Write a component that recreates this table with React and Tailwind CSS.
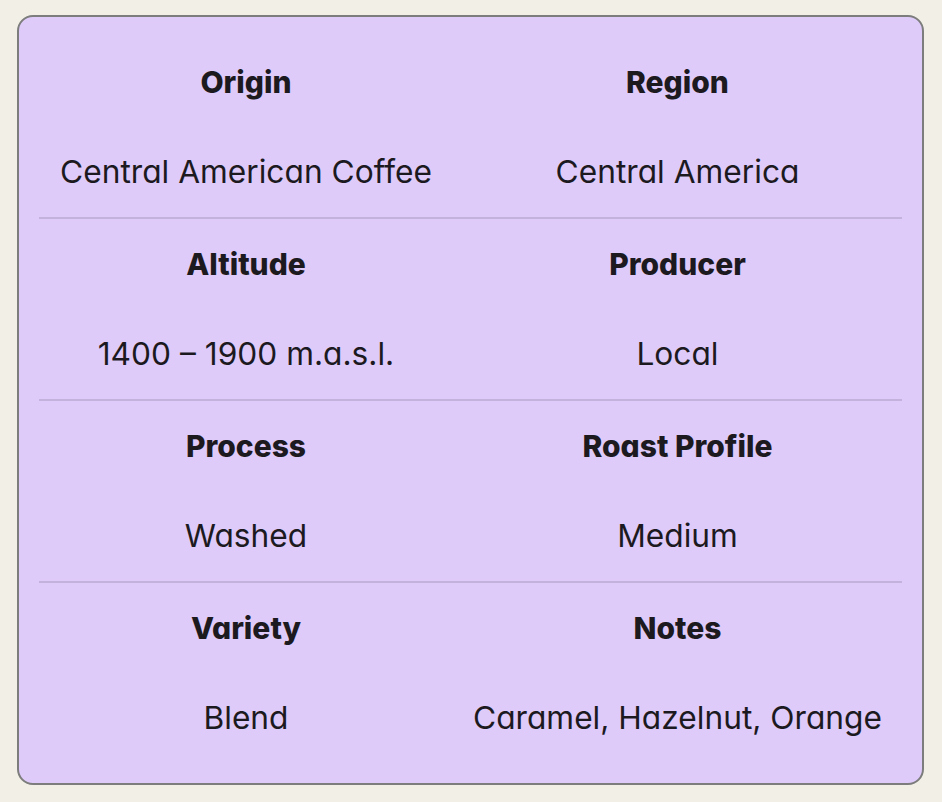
export default function App() {
  const rows = [
    [["Origin", "Central American Coffee"], ["Region", "Central America"]],
    [["Altitude", "1400 – 1900 m.a.s.l."], ["Producer", "Local"]],
    [["Process", "Washed"], ["Roast Profile", "Medium"]],
    [["Variety", "Blend"], ["Notes", "Caramel, Hazelnut, Orange"]],
  ];
  return (
    <div className="min-h-[802px] w-full bg-[#f2f0e6] pt-[15px] pb-[17px] pl-[17px] pr-[18px] font-['Inter',sans-serif] [font-feature-settings:'cv11'] text-[#1c1a1f]">
      <div className="rounded-[16px] border-2 border-[#7d7d7d] bg-[#dfcbfa] p-[20px]">
        {rows.map((row, i) => (
          <div
            key={i}
            className={
              "grid grid-cols-[414px_449px] " +
              (i < rows.length - 1 ? "border-b-2 border-[#c3b2dc]" : "")
            }
          >
            {row.map(([h, v]) => (
              <div key={h} className="flex flex-col items-center pt-[25px] pb-[25px]">
                <div className="h-[40px] leading-[40px] text-[30px] font-extrabold">{h}</div>
                <div className="mt-[50px] h-[40px] leading-[40px] text-[31.7px] font-normal whitespace-nowrap">{v}</div>
              </div>
            ))}
          </div>
        ))}
      </div>
    </div>
  );
}
